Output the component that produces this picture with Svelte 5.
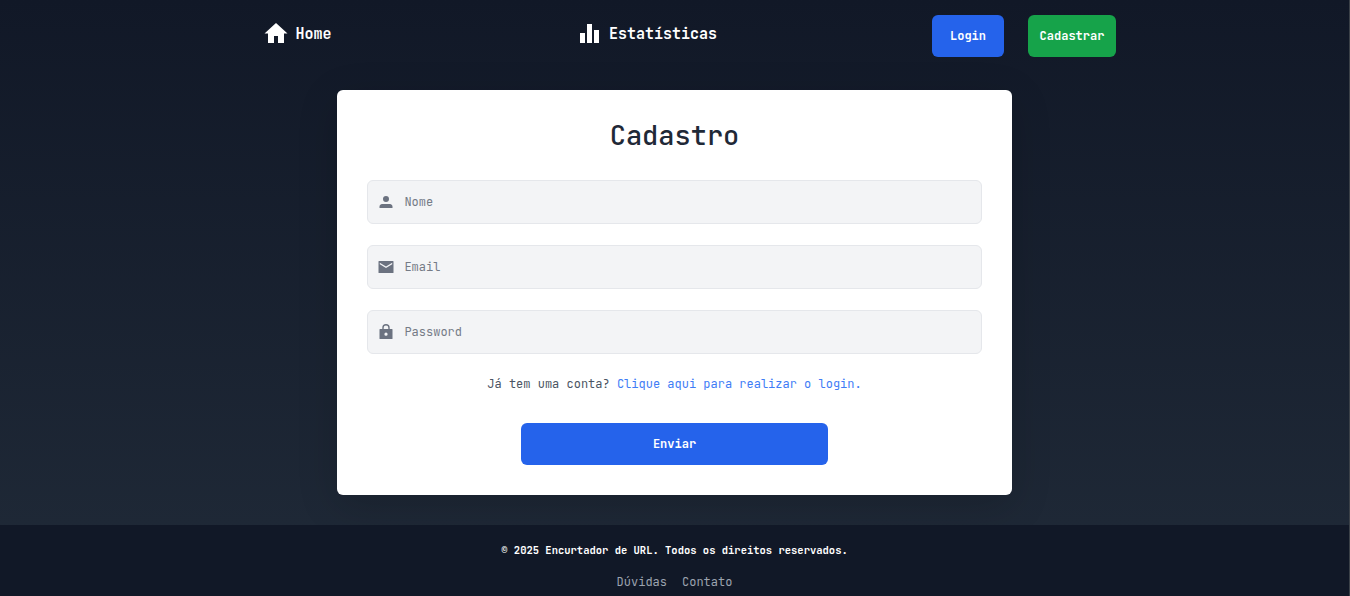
<script>
  const fields = [
    { label: 'Nome', type: 'text', icon: 'M9 3a3 3 0 0 1 0 6 3 3 0 0 1 0-6zM2.500 15v-1.500c0-2 2-2.500 3.500-2.500h6c1.500 0 3.500.500 3.500 2.500V15z' },
    { label: 'Email', type: 'email', icon: 'M2 3h14q.5 0 .5.500v11q0 .5-.5.500H2q-.5 0-.5-.500v-11Q1.500 3 2 3zm.800 1.800v1.400L9 10l6.200-3.800V4.800L9 8.600z' },
    { label: 'Password', type: 'password', icon: 'M5.300 6V4.700a3.700 3.700 0 0 1 7.400 0V6H15q.5 0 .5.500v9q0 .5-.5.500H3q-.5 0-.5-.500v-9Q2.500 6 3 6zM6.700 6h4.600V4.700a2.300 2.300 0 0 0-4.600 0zM9 9.600a1.600 1.600 0 1 0 0 3.200 1.600 1.600 0 0 0 0-3.200z' }
  ];
</script>

<div class="page">
  <header>
    <a class="nav home" href="#home">
      <svg width="24" height="22" viewBox="0 0 24 22"><path d="M12 1L.5 11.500H4V21h6v-7h4v7h6v-9.500h3.500z" /></svg>
      <span>Home</span>
    </a>
    <a class="nav stats" href="#stats">
      <svg width="19" height="19" viewBox="0 0 19 19"><path d="M0 9h5v10H0zM7 0h5v19H7zM14 6h5v13h-5z" /></svg>
      <span>Estatísticas</span>
    </a>
    <div class="actions">
      <a class="btn login" href="#login">Login</a>
      <a class="btn register" href="#register">Cadastrar</a>
    </div>
  </header>

  <main>
    <form>
      <h1>Cadastro</h1>
      {#each fields as f}
        <label class="field">
          <svg width="18" height="18" viewBox="0 0 18 18"><path d={f.icon} fill-rule="evenodd" /></svg>
          <input type={f.type} placeholder={f.label} />
        </label>
      {/each}
      <p>Já tem uma conta? <a href="#login">Clique aqui para realizar o login.</a></p>
      <button class="btn submit" type="button">Enviar</button>
    </form>
  </main>

  <footer>
    <div class="copy">© 2025 Encurtador de URL. Todos os direitos reservados.</div>
    <nav><a href="#faq">Dúvidas</a><a href="#contact">Contato</a></nav>
  </footer>
</div>

<style>
  :global(body) { background: #111827; overflow: hidden; }
  * { box-sizing: border-box; }
  .page {
    height: 596px;
    display: flex;
    flex-direction: column;
    border-right: 1px solid #3b4148;
    overflow: hidden;
    background: linear-gradient(to bottom, #111827, #1f2937 560px);
    font-family: "JetBrains Mono", "DejaVu Sans Mono", monospace;
    font-size: 12px;
  }
  a { text-decoration: none; color: inherit; }
  svg { fill: currentColor; flex: none; }
  header {
    height: 72px;
    flex: none;
    display: flex;
    align-items: flex-start;
    padding: 15px 233px 0 264px;
  }
  .nav {
    display: flex;
    align-items: center;
    height: 38px;
    color: #fff;
    font-size: 15px;
    font-weight: 700;
  }
  .home { width: 316px; gap: 7.5px; }
  .home svg { margin-top: -2px; }
  .stats { gap: 10px; }
  .stats svg { margin-top: -1px; }
  .actions { display: flex; gap: 24px; margin-left: auto; }
  .btn {
    display: flex;
    align-items: center;
    justify-content: center;
    height: 42px;
    border-radius: 6px;
    color: #fff;
    font-weight: 700;
  }
  .login { width: 72px; background: #2563eb; }
  .register { width: 88px; background: #16a34a; }
  main { height: 453px; flex: none; padding-top: 18px; }
  form {
    width: 675px;
    height: 405px;
    margin: 0 auto;
    padding: 30px;
    background: #fff;
    border-radius: 6px;
    box-shadow: 0 10px 40px rgba(0, 0, 0, 0.16);
  }
  h1 {
    margin: 0 0 30px;
    font-size: 27px;
    font-weight: 500;
    line-height: 30px;
    text-align: center;
    color: #1f2937;
  }
  .field {
    display: flex;
    align-items: center;
    gap: 9px;
    height: 44px;
    margin-bottom: 21px;
    padding: 0 9px 0 9.4px;
    border: 1px solid #e5e7eb;
    border-radius: 6px;
    background: #f3f4f6;
    color: #6b7280;
  }
  input {
    flex: 1;
    border: 0;
    padding: 0;
    outline: 0;
    background: transparent;
    font: inherit;
  }
  input::placeholder { color: #757b86; opacity: 1; }
  p { margin: 0 0 30px; line-height: 18px; text-align: center; color: #4b5563; }
  p a { color: #3f7df6; }
  .submit {
    width: 307px;
    margin: 0 auto;
    border: 0;
    padding: 0;
    background: #2563eb;
    font-family: inherit;
    font-size: 12px;
  }
  footer {
    flex: 1;
    padding-top: 16px;
    background: #111827;
    text-align: center;
    color: #fff;
  }
  .copy { font-size: 10.5px; font-weight: 600; line-height: 18px; }
  footer nav {
    display: flex;
    justify-content: center;
    gap: 15px;
    margin-top: 14px;
    line-height: 18px;
    color: #9ca3af;
  }
</style>
